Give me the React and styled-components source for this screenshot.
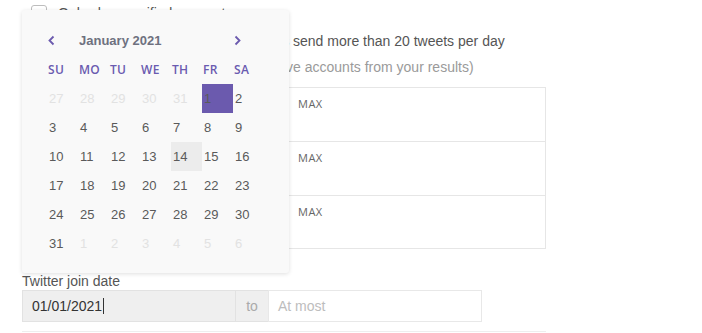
import React from 'react';
import styled, { createGlobalStyle } from 'styled-components';

const GlobalStyle = createGlobalStyle`
  html, body {
    margin: 0;
    background: #ffffff;
    font-family: "Liberation Sans", Arial, sans-serif;
  }
`;

const Page = styled.div`
  position: relative;
  width: 524px;
  padding: 5px 22px 0;
`;

const CheckRow = styled.label`
  display: flex;
  align-items: center;
  gap: 11px;
  height: ${(p) => p.h || 20}px;
  margin-top: ${(p) => p.mt || 0}px;
  padding-left: 9px;
  font-size: 14px;
  color: #555;
  white-space: nowrap;
`;

const Box = styled.span`
  width: 16px;
  height: 16px;
  box-sizing: border-box;
  border: 1px solid #bdbdbd;
  border-radius: 3px;
  background: #fff;
  flex: none;
`;

const Hint = styled.div`
  margin-top: 6px;
  padding-left: 40px;
  line-height: 20px;
  font-size: 14px;
  color: #9a9a9a;
  white-space: nowrap;
`;

const RangeTable = styled.div`
  margin-top: 10px;
  border: 1px solid #e6e6e6;
`;

const RangeRow = styled.div`
  display: grid;
  grid-template-columns: 1fr 1fr;
  height: ${(p) => p.h}px;
  border-top: ${(p) => (p.first ? 'none' : '1px solid #e6e6e6')};
`;

const RangeCell = styled.div`
  padding: 8px 14px;
  font-family: "Open Sans", "Noto Sans", sans-serif;
  font-size: 11px;
  letter-spacing: 0.5px;
  color: #666;
`;

const Label = styled.div`
  margin-top: 23px;
  line-height: 18px;
  font-size: 14px;
  color: #555;
`;

const InputGroup = styled.div`
  display: flex;
  width: 460px;
  height: 32px;
`;

const Field = styled.div`
  display: flex;
  align-items: center;
  width: 214px;
  box-sizing: border-box;
  padding-left: 9px;
  border: 1px solid ${(p) => (p.filled ? '#e2e2e2' : '#e8e8e8')};
  background: ${(p) => (p.filled ? '#efefef' : '#ffffff')};
  color: ${(p) => (p.filled ? '#333' : '#bdbdbd')};
  font-size: 14px;
`;

const Caret = styled.span`
  display: inline-block;
  width: 1px;
  height: 16px;
  margin-left: 1px;
  background: #333;
`;

const Addon = styled.div`
  display: flex;
  align-items: center;
  justify-content: center;
  width: 32px;
  background: #efefef;
  border-top: 1px solid #e2e2e2;
  border-bottom: 1px solid #e2e2e2;
  box-sizing: border-box;
  color: #aaa;
  font-size: 14px;
`;

const Divider = styled.div`
  margin-top: 9px;
  height: 1px;
  background: #eeeeee;
`;

const Popover = styled.div`
  position: absolute;
  left: 22px;
  top: 10px;
  width: 267px;
  height: 263px;
  box-sizing: border-box;
  padding: 20px 0 0 25px;
  background: #f9f9f9;
  border-radius: 3px;
  box-shadow: 0 1px 4px rgba(0, 0, 0, 0.13);
`;

const Grid = styled.div`
  display: grid;
  grid-template-columns: repeat(7, 31px);
  margin-top: ${(p) => p.mt || 0}px;
  grid-auto-rows: ${(p) => p.rh || 29}px;
`;

const NavButton = styled.div`
  display: flex;
  align-items: center;
  padding-left: ${(p) => p.pl}px;
  color: #6b5aae;
`;

const Title = styled.div`
  grid-column: 2 / span 5;
  display: flex;
  align-items: center;
  padding-left: 1px;
  font-size: 13px;
  font-weight: bold;
  color: #6e717f;
`;

const WeekDay = styled.div`
  display: flex;
  align-items: center;
  padding-left: 1px;
  font-family: "Open Sans", "Noto Sans", sans-serif;
  font-size: 12px;
  font-weight: 600;
  letter-spacing: 0.3px;
  color: #6a5bb0;
`;

const Day = styled.div`
  display: flex;
  align-items: center;
  padding-left: 2px;
  font-size: 13px;
  color: ${(p) => (p.muted ? '#e2e2e2' : '#5a5a5a')};
  background: ${(p) => (p.selected ? '#6b5aae' : p.today ? '#ececec' : 'transparent')};
`;

const Chevron = ({ dir }) => (
  <svg width="7" height="11" viewBox="0 0 7 11">
    <polyline
      points={dir === 'left' ? '5.5,1.5 1.5,5.5 5.5,9.5' : '1.5,1.5 5.5,5.5 1.5,9.5'}
      fill="none"
      stroke="currentColor"
      strokeWidth="1.8"
    />
  </svg>
);

const weekDays = ['SU', 'MO', 'TU', 'WE', 'TH', 'FR', 'SA'];

const days = [
  ...[27, 28, 29, 30, 31].map((d) => ({ d, muted: true })),
  ...Array.from({ length: 31 }, (_, i) => ({ d: i + 1 })),
  ...[1, 2, 3, 4, 5, 6].map((d) => ({ d, muted: true })),
];

const App = () => {
  return (
    <>
      <GlobalStyle />
      <Page>
        <CheckRow h={16}>
          <Box />
          Only show verified accounts
        </CheckRow>
        <CheckRow mt={10}>
          <Box />
          Exclude spam &amp; automated accounts send more than 20 tweets per day
        </CheckRow>
        <Hint>(This option removes any overly active accounts from your results)</Hint>

        <RangeTable>
          {[53, 53, 52].map((h, i) => (
            <RangeRow key={i} h={h} first={i === 0}>
              <RangeCell>MIN</RangeCell>
              <RangeCell>MAX</RangeCell>
            </RangeRow>
          ))}
        </RangeTable>

        <Label>Twitter join date</Label>
        <InputGroup>
          <Field filled>
            01/01/2021
            <Caret />
          </Field>
          <Addon>to</Addon>
          <Field>At most</Field>
        </InputGroup>
        <Divider />

        <Popover>
          <Grid rh={20}>
            <NavButton pl={1}>
              <Chevron dir="left" />
            </NavButton>
            <Title>January 2021</Title>
            <NavButton pl={1}>
              <Chevron dir="right" />
            </NavButton>
          </Grid>
          <Grid mt={9} rh={20}>
            {weekDays.map((w) => (
              <WeekDay key={w}>{w}</WeekDay>
            ))}
          </Grid>
          <Grid mt={5}>
            {days.map((day, i) => (
              <Day
                key={i}
                muted={day.muted}
                selected={!day.muted && day.d === 1}
                today={!day.muted && day.d === 14}
              >
                {day.d}
              </Day>
            ))}
          </Grid>
        </Popover>
      </Page>
    </>
  );
};

export default App;
